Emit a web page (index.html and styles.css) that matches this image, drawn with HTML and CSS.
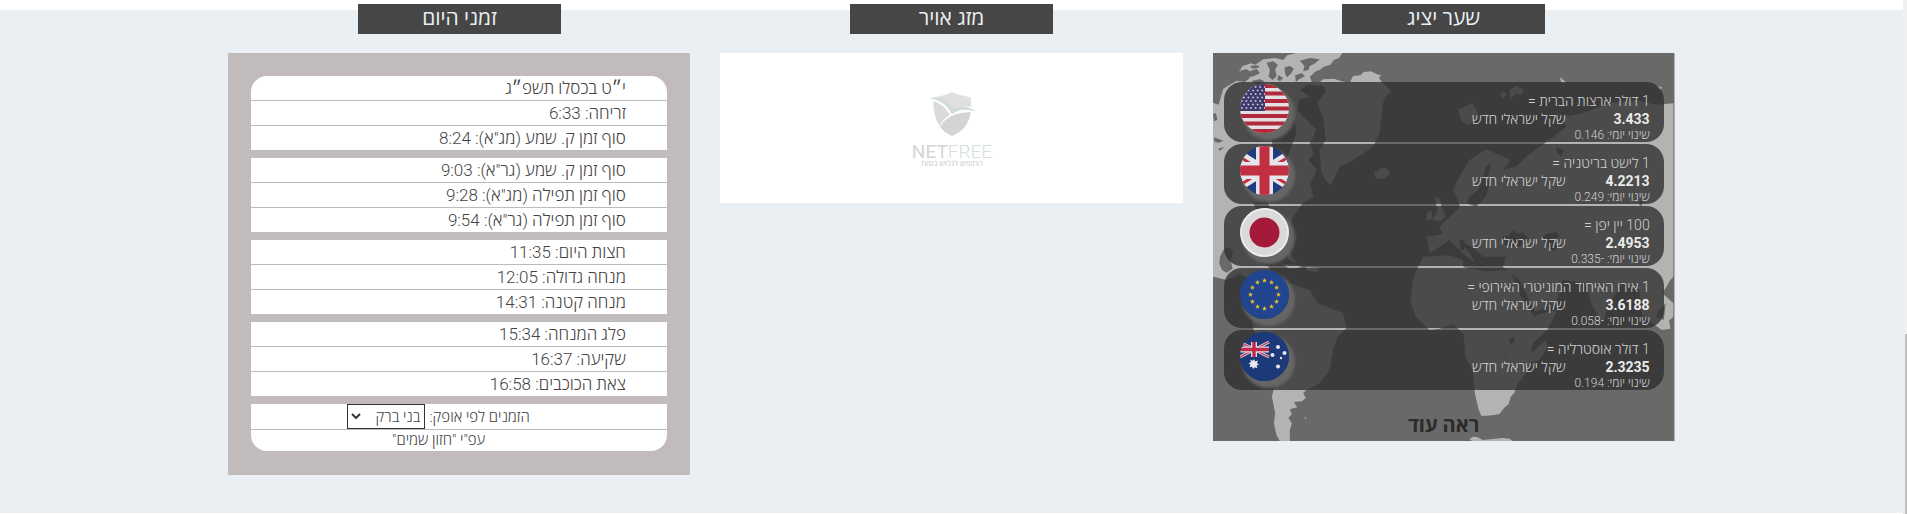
FILE: index.html
```
<!DOCTYPE html>
<html lang="he">
<head>
<meta charset="utf-8">
<title>מידע יומי</title>
<link rel="stylesheet" href="styles.css">
</head>
<body>
<main class="page" dir="rtl">
  <section class="info-strip">
    <div class="columns">

      <article class="column">
        <h2 class="column-title">שער יציג</h2>
        <div class="rates">
          <svg class="world-map" viewBox="9 9 1386 1164" preserveAspectRatio="none" aria-hidden="true">
            <g fill="#b3b3b3">
              <path d="M398 9L388 24 372 30 362 44 342 50 330 60 318 64 300 80 306 96 340 96 330 108 296 102 270 120 300 140 268 150 262 180 290 210 320 240 300 280 312 310 296 330 322 360 300 400 312 440 276 462 250 500 232 560 246 620 262 640 240 632 220 600 160 606 150 640 176 650 200 700 130 690 90 672 50 690 9 680V158L26 164 34 136 40 116 60 104 80 92 104 96 120 84 106 70 88 64 98 48 124 40 136 44 160 28 196 24 220 30 232 16 260 9Z"/>
              <path d="M328 98L340 88 372 86 396 94 420 98 430 78 452 76 462 66 484 64 500 72 514 76 508 84 518 98 545 122 528 140 520 160 510 250 490 290 430 330 390 350 376 380 362 405 346 390 334 360 330 300 348 270 340 200 322 160 350 120Z"/>
              <path d="M492 364L504 366 510 356 528 354 542 368 528 384 500 388Z"/>
              <path d="M130 836L126 800 150 740 190 690 240 700 300 720 324 760 400 790 410 834 384 860 370 900 360 960 330 1000 290 1020 280 1030 288 1044 276 1054 252 1056 262 1072 240 1078 246 1092 236 1104 246 1120 240 1140 240 1173H210L200 1156 192 1120 196 1090 186 1040 196 1000 186 920 150 880Z"/>
              <path d="M640 620L720 616 760 630 762 652 830 664 900 660 920 700 970 796 1044 780 1014 840 970 880 956 960 926 1000 914 1030 904 1040 898 1062 884 1074 870 1092 850 1096 816 1098 808 1080 796 1030 790 960 768 920 762 850 730 822 690 836 660 840 618 800 602 750 612 680Z"/>
              <path d="M660 610L652 560 700 552 690 530 720 500 752 470 740 440 730 420 750 380 780 330 830 298 904 330 880 360 920 350 950 320 1020 270 1070 230 1062 200 1120 190 1200 160 1280 150 1340 164 1393 160V680L1384 690 1360 730 1393 760V800L1380 812 1384 836 1358 840 1330 820 1300 800 1290 720 1240 700 1200 760 1180 820 1150 770 1130 700 1060 690 1040 760 980 790 930 690 880 650 890 620 820 620 790 590 760 580 800 640 760 610 720 570Z"/>
              <path d="M674 440L692 446 696 470 710 500 690 514 668 510 684 480ZM652 490L666 480 668 506 650 512Z"/>
              <path d="M745 180L790 160 806 190 780 226 756 214ZM872 132L884 124 892 134 880 146ZM900 120L922 108 944 120 934 136 918 130 904 150ZM1052 82L1072 98H1056ZM1340 108L1360 112 1352 120Z"/>
              <path d="M945 930L1010 870 1014 890 990 930 956 940ZM780 1168L790 1160 804 1162 820 1170 880 1164 900 1166 910 1173H788ZM286 1100L292 1110 284 1104Z"/>
              <path d="M210 640L260 644 276 652 240 656ZM290 652L330 654 320 666 288 660Z"/>
            </g>
            <g fill="#696969">
              <path d="M90 62L110 58 120 64 140 56 150 70 132 78 108 84ZM120 48L142 46 150 52 128 56ZM170 38L190 34 204 44 196 58 200 78 188 90 176 80 180 60ZM224 52L240 48 252 56 244 70 232 82 226 72ZM126 92L150 88 164 94 150 102 130 100ZM206 76L220 84 210 94 202 88ZM270 32L300 24 330 28 316 40 300 48 296 60 280 64 284 48ZM256 76L276 70 286 78 268 88 258 96Z"/>
              <path d="M180 230L250 190 260 250 230 330 190 300ZM40 600L56 590 70 606 62 630 68 656 50 668 36 660 28 640 30 620ZM130 460L170 452 190 490 150 500ZM9 192L18 190 22 210 12 214ZM12 262L40 272 26 278 14 276ZM24 296L44 290 30 302Z"/>
              <path d="M830 350L846 340 836 380 840 400 830 440 800 470 772 460 780 440 806 420ZM944 250L970 200 976 206 960 276ZM1040 290L1064 300 1056 320 1044 310ZM880 560L900 556 910 540 926 552 940 546 960 570 930 590 886 586ZM1000 560L1010 552 1040 546 1050 556 1036 570 1050 590 1030 604 1014 590ZM750 570L760 568 768 580 764 600 752 600Z"/>
              <path d="M912 684L922 694 950 750 962 776 946 760 930 730ZM970 790L1030 760 1010 780 976 800ZM900 868L916 860 912 880 902 884ZM884 890L892 930 888 920Z"/>
              <path d="M1366 734L1376 726 1384 732 1376 742ZM1340 800L1350 780 1370 760 1364 810ZM1288 460L1306 440 1296 470Z"/>
            </g>
          </svg>

          <ul class="rate-list">
            <li class="rate">
              <div class="rate-text">
                <p>1 דולר ארצות הברית =</p>
                <p class="rate-value"><b>3.433</b><span>שקל ישראלי חדש</span></p>
                <p class="rate-change">שינוי יומי: 0.146</p>
              </div>
              <svg class="flag" viewBox="0 0 49 49" role="img" aria-label="ארצות הברית">
                <path fill="#e4e0e1" d="M0 0h49v49H0z"/>
                <path stroke="#b02a3c" stroke-width="3.8" d="M0 2h49M0 9.500h49M0 17h49M0 24.500h49M0 32h49M0 39.500h49M0 47h49"/>
                <path fill="#3d3c6c" d="M0 0h25v27H0z"/>
                <path stroke="#dcdce6" stroke-width="1.600" stroke-dasharray="1.600 3" d="M1 3h24M3 6.500h22M1 10h24M3 13.500h22M1 17h24M3 20.500h22M1 24h24"/>
              </svg>
            </li>
            <li class="rate">
              <div class="rate-text">
                <p>1 לישט בריטניה =</p>
                <p class="rate-value"><b>4.2213</b><span>שקל ישראלי חדש</span></p>
                <p class="rate-change">שינוי יומי: 0.249</p>
              </div>
              <svg class="flag" viewBox="0 0 49 49" role="img" aria-label="בריטניה">
                <path fill="#1f3c80" d="M0 0h49v49H0z"/>
                <path stroke="#e6e6ea" stroke-width="9" d="M-8 4L57 45M57 4L-8 45"/>
                <path stroke="#c22f40" stroke-width="3" d="M-8 6L24 26M57 6L24 26M-8 44L24 24M57 44L24 24"/>
                <path stroke="#e6e6ea" stroke-width="17" d="M24.500 0v49M0 24.500h49"/>
                <path stroke="#c22f40" stroke-width="10" d="M24.500 0v49M0 24.500h49"/>
              </svg>
            </li>
            <li class="rate">
              <div class="rate-text">
                <p>100 יין יפן =</p>
                <p class="rate-value"><b>2.4953</b><span>שקל ישראלי חדש</span></p>
                <p class="rate-change">שינוי יומי: -0.335</p>
              </div>
              <svg class="flag" viewBox="0 0 49 49" role="img" aria-label="יפן">
                <path fill="#dadada" d="M0 0h49v49H0z"/>
                <circle cx="24.500" cy="24.500" r="15" fill="#a5193a"/>
                <circle cx="24.500" cy="24.500" r="23.500" fill="none" stroke="#efefef" stroke-width="1.500"/>
              </svg>
            </li>
            <li class="rate">
              <div class="rate-text">
                <p>1 אירו האיחוד המוניטרי האירופי =</p>
                <p class="rate-value"><b>3.6188</b><span>שקל ישראלי חדש</span></p>
                <p class="rate-change">שינוי יומי: -0.058</p>
              </div>
              <svg class="flag" viewBox="0 0 49 49" role="img" aria-label="האיחוד האירופי">
                <defs><path id="star" fill="#e3bd2d" d="M0-2.500L.7-.8 2.400-.8 1.100.4 1.500 2.200 0 1.200-1.500 2.200-1.100.4-2.400-.8-.7-.8Z"/></defs>
                <path fill="#21458f" d="M0 0h49v49H0z"/>
                <use href="#star" x="24.500" y="10.500"/><use href="#star" x="31.500" y="12.400"/><use href="#star" x="36.600" y="17.500"/><use href="#star" x="38.500" y="24.500"/>
                <use href="#star" x="36.600" y="31.500"/><use href="#star" x="31.500" y="36.600"/><use href="#star" x="24.500" y="38.500"/><use href="#star" x="17.500" y="36.600"/>
                <use href="#star" x="12.400" y="31.500"/><use href="#star" x="10.500" y="24.500"/><use href="#star" x="12.400" y="17.500"/><use href="#star" x="17.500" y="12.400"/>
              </svg>
            </li>
            <li class="rate">
              <div class="rate-text">
                <p>1 דולר אוסטרליה =</p>
                <p class="rate-value"><b>2.3235</b><span>שקל ישראלי חדש</span></p>
                <p class="rate-change">שינוי יומי: 0.194</p>
              </div>
              <svg class="flag" viewBox="0 0 49 49" role="img" aria-label="אוסטרליה">
                <path fill="#1c3a7a" d="M0 0h49v49H0z"/>
                <path stroke="#dcdce4" stroke-width="3" d="M0 10l29 15M29 10L0 25"/>
                <path stroke="#c22848" stroke-width="1.200" d="M0 10l29 15M29 10L0 25"/>
                <path stroke="#dcdce4" stroke-width="6" d="M14 10v15M0 17.500h29"/>
                <path stroke="#c22848" stroke-width="3.400" d="M14 10v15M0 17.500h29"/>
                <path fill="#e8e8ee" d="M14 27l1.200 2.600 2.700-1-1 2.600 2.100 1.300-2.300 1.100.6 2.600-2.500-1-1.500 1.800-1.200-2.200-2.600.5 1-2.500-1.900-1.500 2.300-1-.5-2.500 2.500.9z"/>
                <g fill="#e8e8ee"><circle cx="38" cy="15" r="2"/><circle cx="32.500" cy="23" r="2"/><circle cx="44.500" cy="21" r="2"/><circle cx="41" cy="26" r="1.200"/><circle cx="38" cy="34.500" r="2"/></g>
              </svg>
            </li>
          </ul>
          <a class="see-more" href="#rates">ראה עוד</a>
        </div>
      </article>

      <article class="column">
        <h2 class="column-title">מזג אויר</h2>
        <div class="weather">
          <svg class="netfree" viewBox="0 0 120 80" role="img" aria-label="NetFree">
            <path fill="#e0e0e0" d="M42.500 5Q52 4 60 0 69 4 79 5.500V15Q68 13 61 17 55 8 42.500 6Z"/>
            <path fill="#dadada" d="M41.500 9Q52 12 58 23 51 27 47.500 34 41 24 41.500 9Z"/>
            <path fill="#d4d4d4" d="M48 35Q55 21 78.500 20 77 37 60 44 53 41 48 35Z"/>
            <path fill="#d0dcd9" d="M37 6.500Q53 2 61.500 16.500 71 11 84 19.500 68 15 60 22.500 53 8 37 6.500Z"/>
            <text class="logo-name" x="60" y="66" text-anchor="middle"><tspan fill="#d4d4d4" font-weight="400">NET</tspan><tspan fill="#d3e0dc">FREE</tspan></text>
            <text class="logo-tag" x="60" y="74" text-anchor="middle">החופש לגלוש בטוח</text>
          </svg>
        </div>
      </article>

      <article class="column">
        <h2 class="column-title">זמני היום</h2>
        <div class="times">
          <ul class="time-group">
            <li>י״ט בכסלו תשפ״ג</li>
            <li>זריחה: 6:33</li>
            <li>סוף זמן ק. שמע (מג"א): 8:24</li>
          </ul>
          <ul class="time-group">
            <li>סוף זמן ק. שמע (גר"א): 9:03</li>
            <li>סוף זמן תפילה (מג"א): 9:28</li>
            <li>סוף זמן תפילה (גר"א): 9:54</li>
          </ul>
          <ul class="time-group">
            <li>חצות היום: 11:35</li>
            <li>מנחה גדולה: 12:05</li>
            <li>מנחה קטנה: 14:31</li>
          </ul>
          <ul class="time-group">
            <li>פלג המנחה: 15:34</li>
            <li>שקיעה: 16:37</li>
            <li>צאת הכוכבים: 16:58</li>
          </ul>
          <div class="time-group horizon">
            <div class="horizon-row">
              <label for="city">הזמנים לפי אופק:</label>
              <span class="select-box">
                <select id="city"><option>בני ברק</option><option>ירושלים</option></select>
                <svg class="chevron" viewBox="0 0 10 6" aria-hidden="true"><path d="M1 1l4 4 4-4" fill="none" stroke="#333" stroke-width="2"/></svg>
              </span>
            </div>
            <p class="source">עפ"י "חזון שמים"</p>
          </div>
        </div>
      </article>

    </div>
  </section>
</main>
<div class="scroll-track" aria-hidden="true"><div class="scroll-thumb"></div></div>
</body>
</html>
```
FILE: styles.css
```
* { box-sizing: border-box; }

body {
  margin: 0;
  display: flex;
  background: #fff;
  color: #444;
  font-family: Roboto, "Open Sans", sans-serif;
  font-size: 16px;
  font-weight: 300;
}

h2, p, ul { margin: 0; padding: 0; }
ul { list-style: none; }

.page { flex: 1; padding: 10px 0 1px; }

.info-strip { background: #eaeff3; padding-bottom: 38px; }

.columns {
  width: 76%;
  margin: 0 auto;
  display: grid;
  grid-template-columns: repeat(3, 1fr);
  gap: 30px;
  align-items: start;
}

.column { margin-top: -6px; }

.column-title {
  width: 44%;
  height: 30px;
  margin: 0 auto 19px;
  background: #464646;
  color: #eaeff3;
  font-size: 21px;
  font-weight: 500;
  line-height: 28px;
  text-align: center;
}

/* exchange rates */
.rates {
  position: relative;
  padding: 29px 10px 0 11px;
  background: #696969;
  border-right: 1px solid #b3b3b3;
}

.world-map {
  position: absolute;
  inset: 0;
  width: 100%;
  height: 100%;
}

.rate-list {
  position: relative;
  display: grid;
  gap: 2px;
}

.rate {
  display: flex;
  justify-content: space-between;
  height: 60px;
  padding: 2px 14px 0 16px;
  border-radius: 18px;
  overflow: hidden;
  background: rgba(46, 46, 46, .78);
  color: #d0d0d0;
  font-size: 14px;
  line-height: 18px;
}

.rate-text { padding-top: 8px; }
.rate-value { display: flex; }
.rate-value b { width: 84px; color: #eaeaea; font-weight: 700; }
.rate-change { font-size: 12px; line-height: 14px; }

.flag {
  width: 49px;
  height: 49px;
  border-radius: 50%;
  box-shadow: 4px 5px 3px 2px #666;
}

.see-more {
  position: relative;
  display: block;
  margin-top: 20px;
  color: #2b2b2b;
  font-size: 20px;
  font-weight: 700;
  line-height: 31px;
  text-align: center;
  text-decoration: none;
}

/* weather */
.weather {
  display: flex;
  justify-content: center;
  padding: 39px 0 31px;
  background: #fff;
}

.netfree { width: 120px; height: 80px; }
.logo-name { font-family: Roboto, sans-serif; font-size: 19px; direction: ltr; }
.logo-tag { font-size: 8px; fill: #c8c8c8; font-weight: 400; }

/* times of day */
.times {
  display: grid;
  gap: 8px;
  padding: 23px 23px 24px;
  background: #c1bcbb;
}

.time-group {
  background: #fff;
  font-size: 17px;
  line-height: 24px;
}

.time-group:first-child { border-radius: 16px 16px 0 0; }
.time-group li { padding-right: 10%; }
.time-group li + li { border-top: 1px solid #bbb; }

.horizon {
  border-radius: 0 0 16px 16px;
  font-size: 15px;
}

.horizon-row {
  display: flex;
  justify-content: center;
  align-items: center;
  gap: 4px;
  padding-right: 10%;
  border-bottom: 1px solid #bbb;
}

.select-box { position: relative; display: flex; }

select {
  appearance: none;
  width: 78px;
  height: 25px;
  padding: 0 4px;
  border: 1px solid #333;
  border-radius: 0;
  background: #fff;
  color: #444;
  font: inherit;
}

.chevron {
  position: absolute;
  left: 4px;
  top: 9px;
  width: 10px;
  height: 6px;
  pointer-events: none;
}

.source {
  padding-right: 10%;
  line-height: 21px;
  text-align: center;
}

/* scroll bar at the window edge */
.scroll-track {
  width: 4px;
  display: flex;
  align-items: flex-end;
  padding-left: 2px;
  background: #f0f0f0;
}

.scroll-thumb { width: 100%; height: 35%; background: #c1c1c1; }
```
